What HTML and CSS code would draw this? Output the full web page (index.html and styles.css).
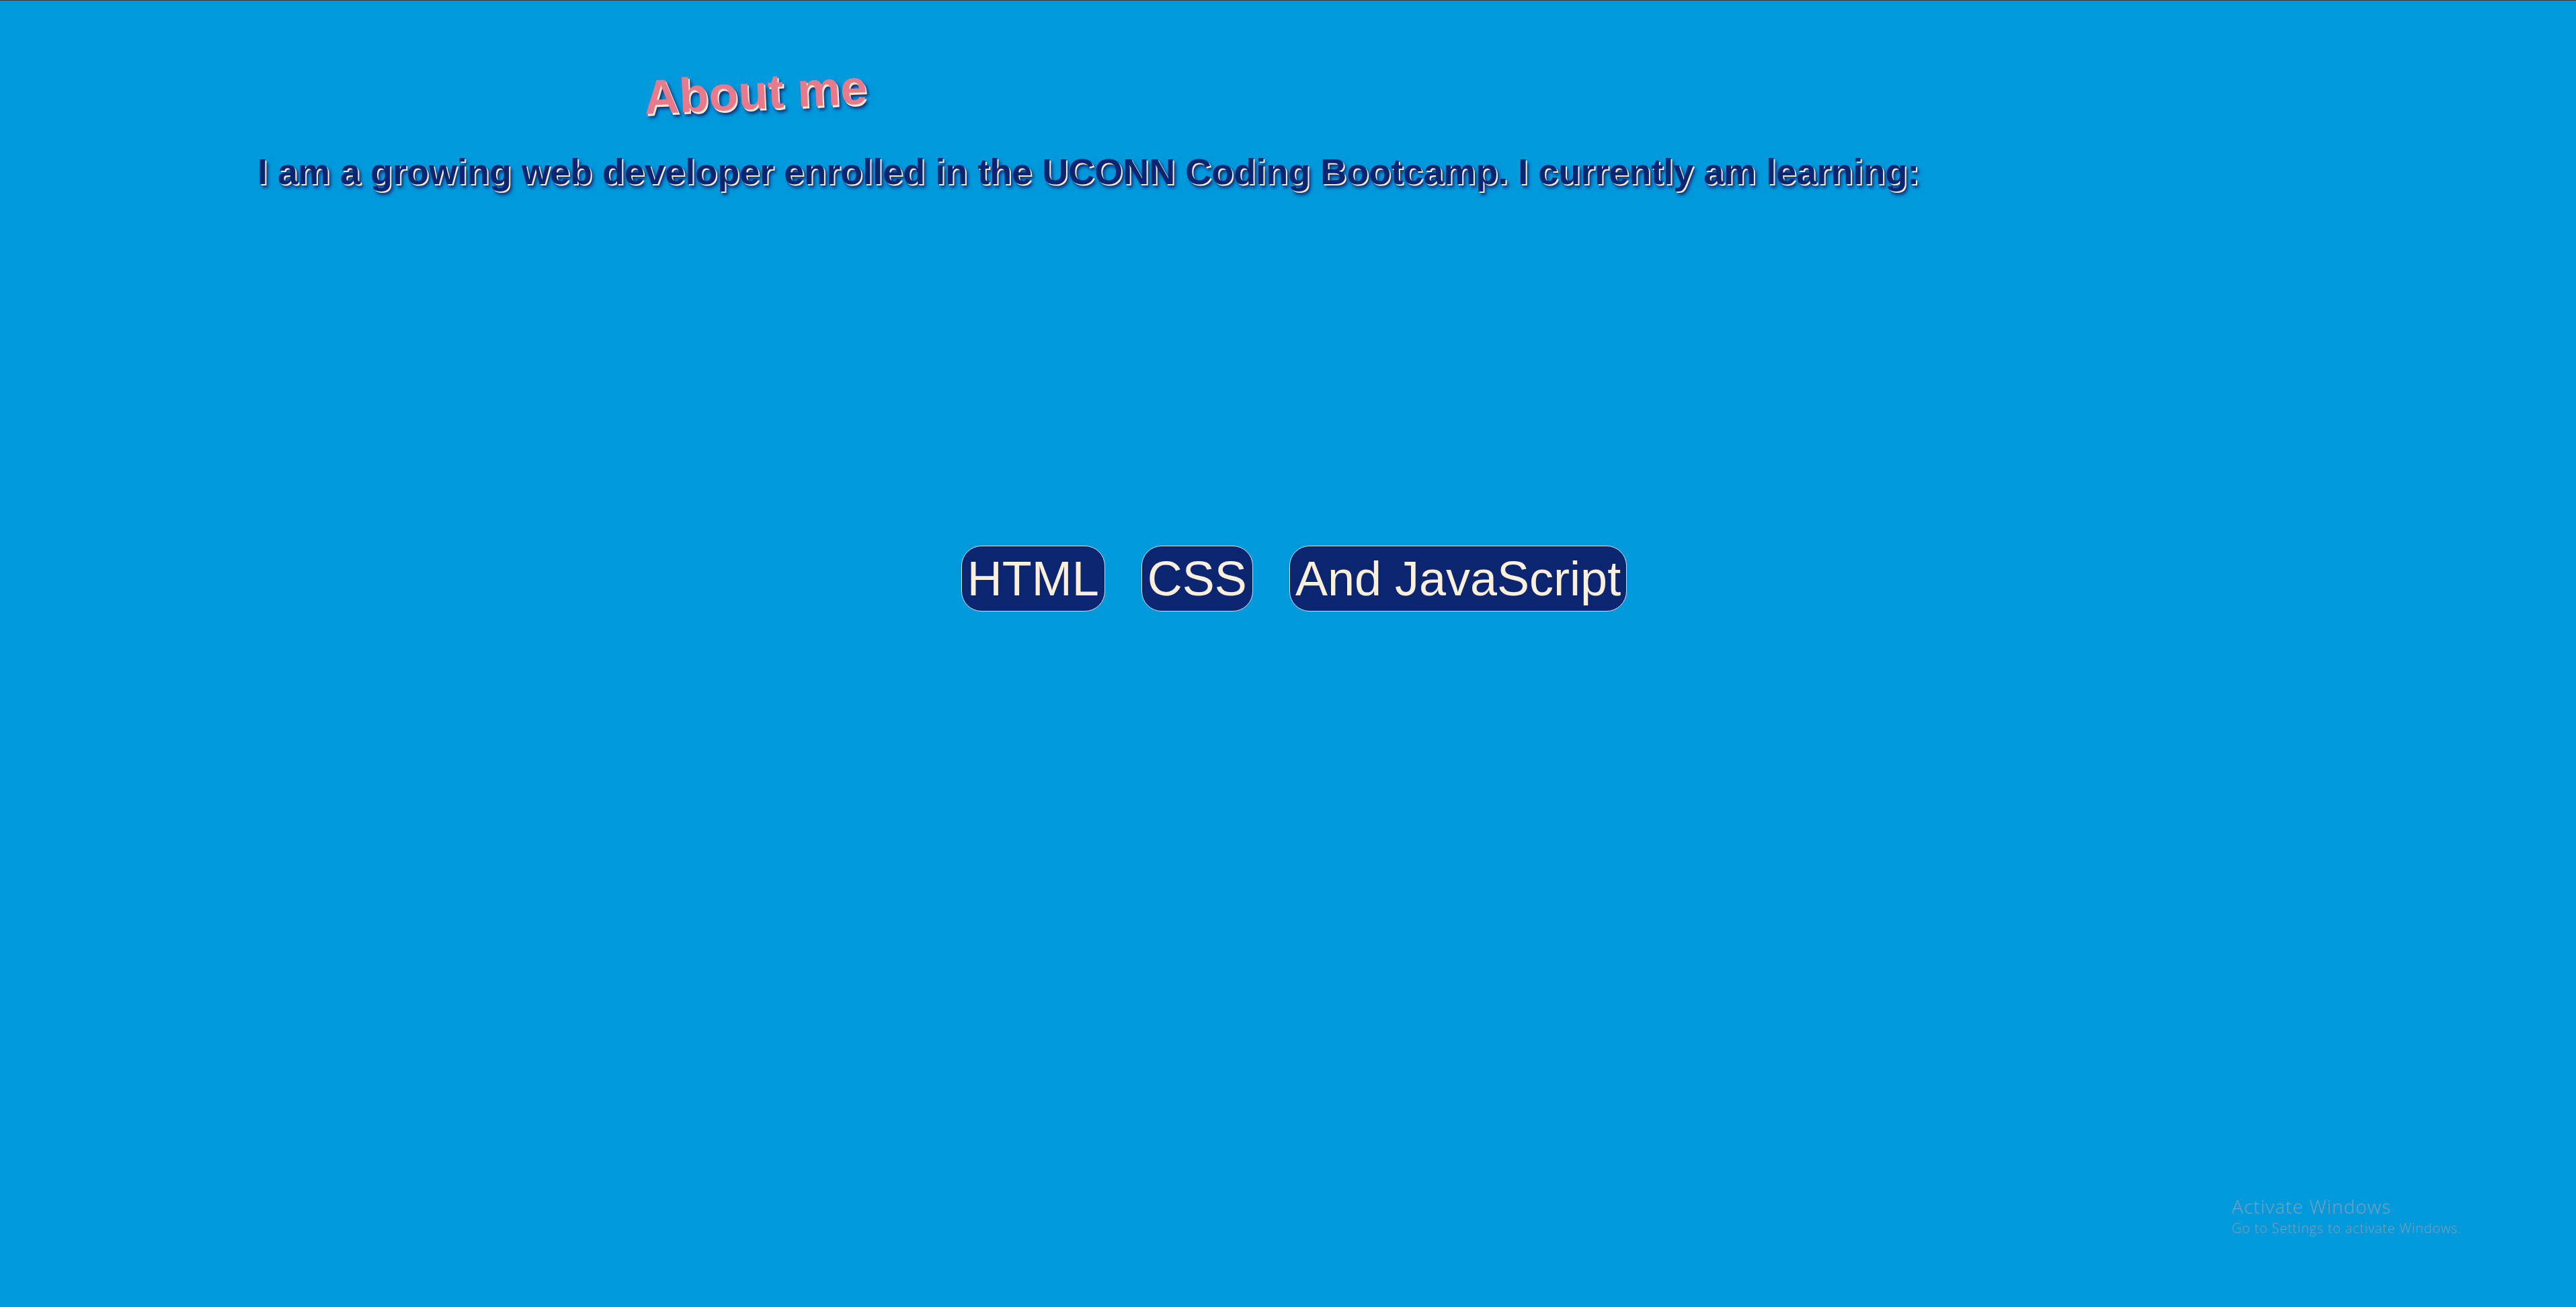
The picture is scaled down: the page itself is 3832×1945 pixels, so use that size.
FILE: index.html
```html
<!DOCTYPE html>
<html lang="en">
<head>
<meta charset="utf-8">
<title>About me</title>
<link rel="stylesheet" href="styles.css">
</head>
<body>
<main class="page">
  <section class="about">
    <h1 class="about-title">About me</h1>
    <p class="about-text">I am a growing web developer enrolled in the UCONN Coding Bootcamp. I currently am learning:</p>
  </section>
  <div class="skills">
    <span class="skill">HTML</span>
    <span class="skill">CSS</span>
    <span class="skill">And JavaScript</span>
  </div>
</main>
<div class="watermark">
  <div class="wm-title">Activate Windows</div>
  <div class="wm-sub">Go to Settings to activate Windows.</div>
</div>
</body>
</html>
```
FILE: styles.css
```css
html, body {
  margin: 0;
  padding: 0;
}
body {
  background: #0099dc;
  font-family: "Liberation Sans", Arial, sans-serif;
  min-height: 100vh;
  border-top: 1px solid #333d47;
  box-sizing: border-box;
  overflow: hidden;
}
.page {
  display: flex;
  flex-direction: column;
}
.about {
  padding-left: 383px;
}
.about-title {
  display: inline-block;
  margin: 95px 0 0 575px;
  font-size: 72px;
  font-weight: bold;
  line-height: normal;
  color: #e97a8c;
  transform: rotate(-2.7deg);
  text-shadow: 2px 3px 0 #fbebd3, 4px 6px 5px #0d2570;
}
.about-text {
  margin: 46px 0 0 0;
  font-size: 54px;
  font-weight: bold;
  line-height: normal;
  color: #0c2570;
  white-space: nowrap;
  text-shadow: 2px 2px 0 #fbebd3, 4px 5px 5px #0d2570;
}
.skills {
  display: flex;
  justify-content: center;
  gap: 54px;
  margin-top: 526px;
  padding-left: 18px;
}
.skill {
  display: inline-block;
  padding: 7px 8px;
  font-size: 72px;
  line-height: normal;
  color: #fcefdc;
  background: #0b2570;
  border: 1px solid #d9dde6;
  border-radius: 30px;
}
.watermark {
  position: fixed;
  left: 3320px;
  top: 1776px;
  font-family: "Open Sans", "Noto Sans", sans-serif;
  font-weight: 300;
  color: #82a0b6;
}
.wm-title {
  font-size: 28px;
  letter-spacing: 1.1px;
  line-height: 38px;
}
.wm-sub {
  font-size: 20px;
  letter-spacing: 0.75px;
  line-height: 28px;
}
```
